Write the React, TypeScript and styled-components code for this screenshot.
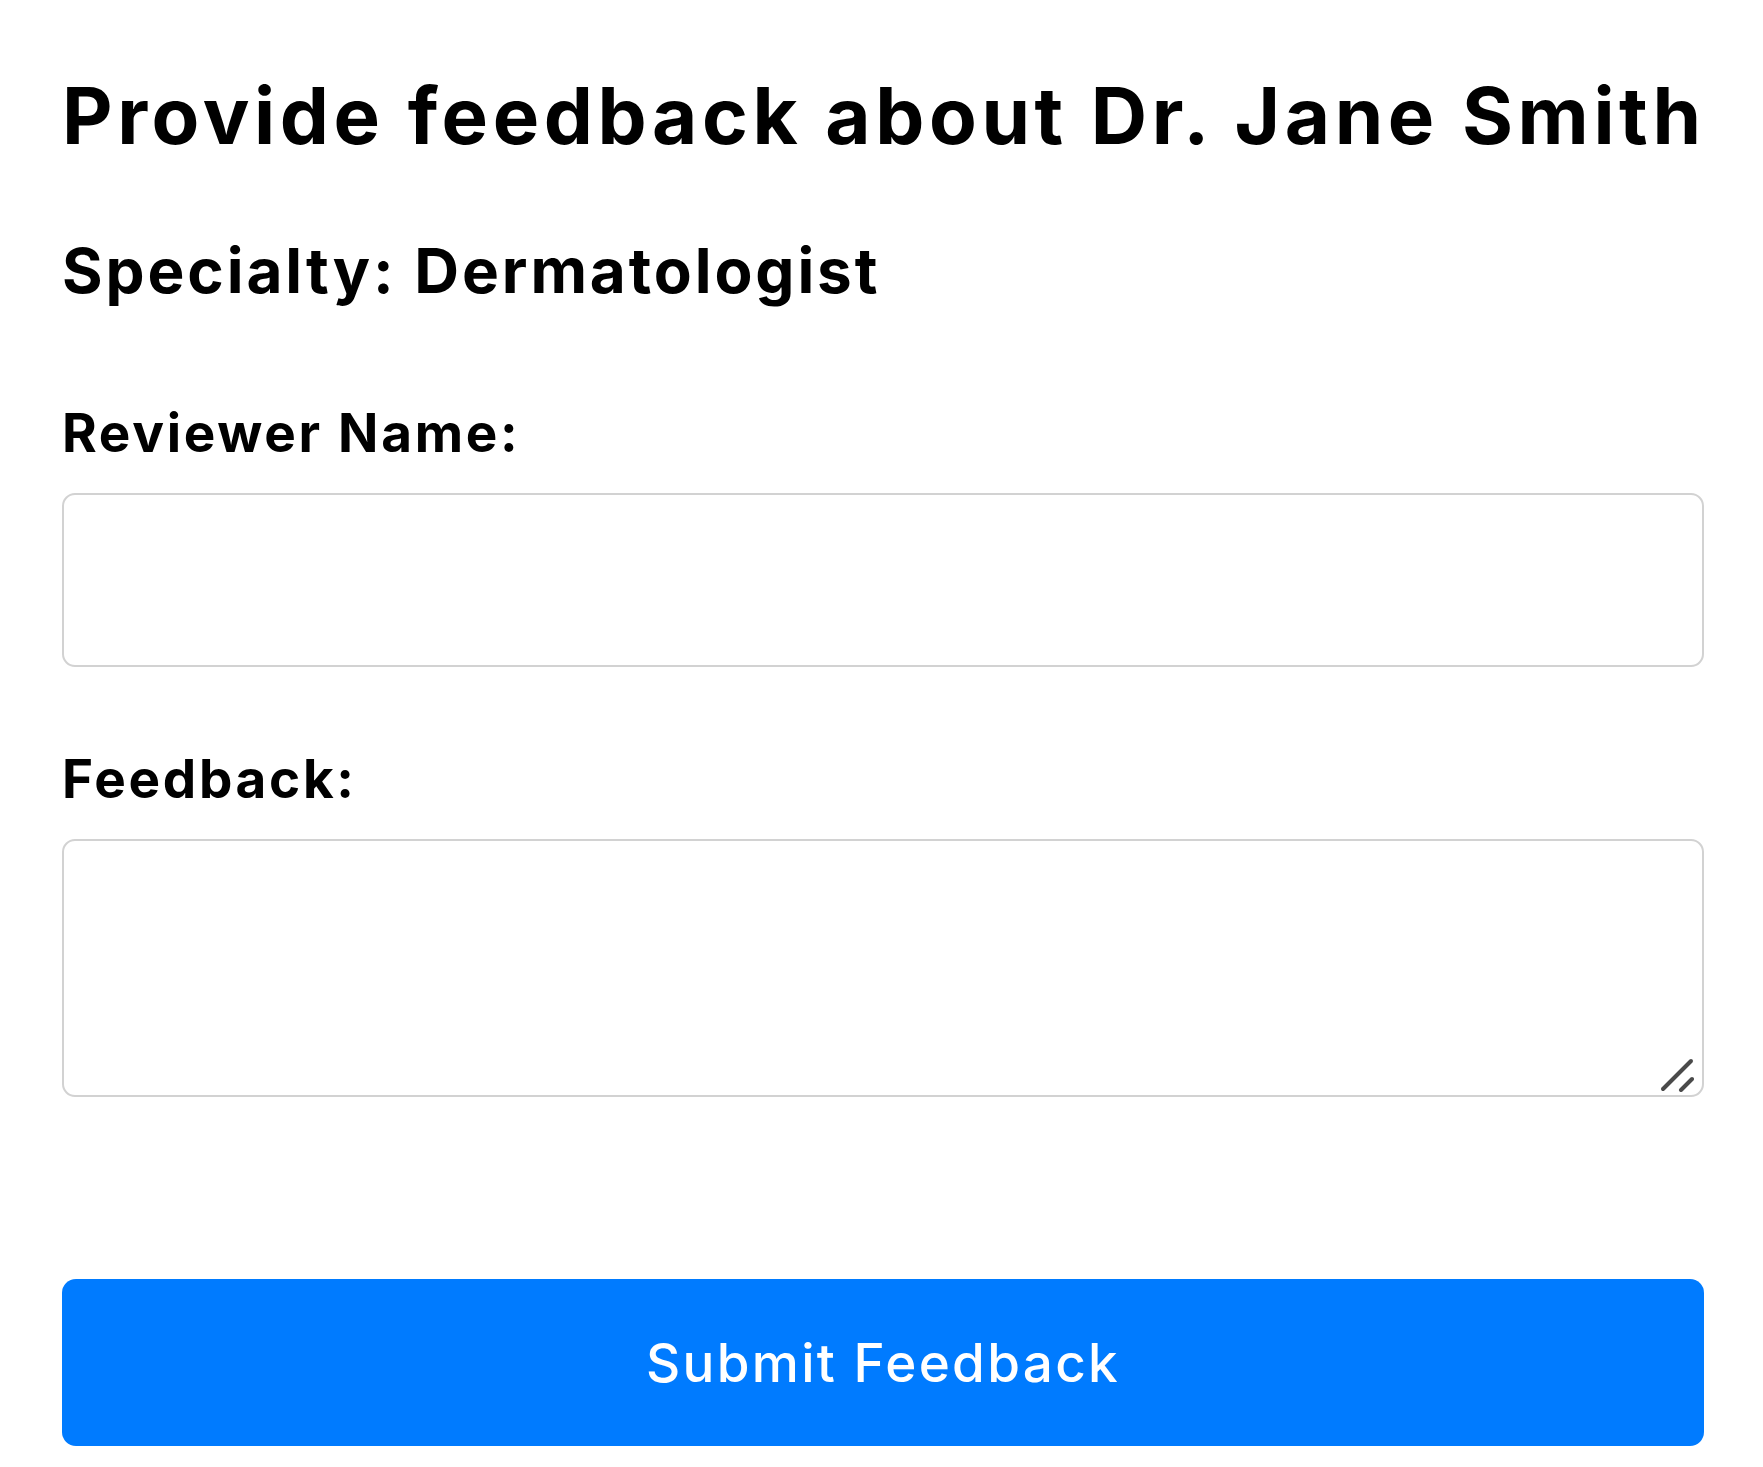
import React from 'react';
import styled, {createGlobalStyle} from "styled-components";

const GlobalStyle = createGlobalStyle`
    html, body {
        margin: 0;
        padding: 0;
        background: #ffffff;
    }
    body {
        font-family: Inter, "Open Sans", sans-serif;
        color: #000000;
    }
`

export default function App() {
    return (
        <>
            <GlobalStyle/>
            <StyledPage>
                <FeedbackForm onSubmit={e => e.preventDefault()}>
                    <StyledTitle>Provide feedback about Dr. Jane Smith</StyledTitle>
                    <StyledSubtitle>Specialty: Dermatologist</StyledSubtitle>

                    <Field>
                        <StyledLabel htmlFor="reviewer">Reviewer Name:</StyledLabel>
                        <StyledInput id="reviewer" type="text"/>
                    </Field>

                    <Field>
                        <StyledLabel htmlFor="feedback">Feedback:</StyledLabel>
                        <TextareaWrapper>
                            <StyledTextarea id="feedback"/>
                            <ResizeGrip width={34} height={34} viewBox="0 0 34 34">
                                <line x1={3} y1={31} x2={31} y2={3}/>
                                <line x1={21} y1={32} x2={32} y2={21}/>
                            </ResizeGrip>
                        </TextareaWrapper>
                    </Field>

                    <SubmitButton type="submit">Submit Feedback</SubmitButton>
                </FeedbackForm>
            </StyledPage>
        </>
    );
}

const StyledPage = styled.div`
    padding: 69px 59px 20px 62px;
`

const FeedbackForm = styled.form`
    display: flex;
    flex-direction: column;
    width: 1642px;
`

const StyledTitle = styled.h2`
    margin: 0;
    font-size: 78px;
    line-height: 94px;
    font-weight: 700;
    letter-spacing: 4.6px;
    white-space: nowrap;
`

const StyledSubtitle = styled.h3`
    margin: 70px 0 0;
    font-size: 62px;
    line-height: 75px;
    font-weight: 700;
    letter-spacing: 2.9px;
`

const Field = styled.div`
    display: flex;
    flex-direction: column;
    gap: 28px;
    margin-top: 93px;

    & + & {
        margin-top: 80px;
    }
`

const StyledLabel = styled.label`
    font-size: 53px;
    line-height: 64px;
    font-weight: 700;
    letter-spacing: 2.7px;
`

const StyledInput = styled.input`
    box-sizing: border-box;
    width: 100%;
    height: 174px;
    border: 2px solid #d2d2d2;
    border-radius: 13px;
    padding: 0 30px;
    font: inherit;
    font-size: 53px;
    outline: none;
`

const TextareaWrapper = styled.div`
    position: relative;
    display: flex;
`

const StyledTextarea = styled.textarea`
    box-sizing: border-box;
    width: 100%;
    height: 258px;
    border: 2px solid #d2d2d2;
    border-radius: 13px;
    padding: 20px 30px;
    font: inherit;
    font-size: 53px;
    resize: none;
    outline: none;
`

const ResizeGrip = styled.svg`
    position: absolute;
    right: 10px;
    bottom: 5px;
    stroke: #4a4a4a;
    stroke-width: 4;
    stroke-linecap: round;
    pointer-events: none;
`

const SubmitButton = styled.button`
    margin-top: 182px;
    height: 167px;
    width: 100%;
    border: none;
    border-radius: 14px;
    background-color: #007bff;
    color: #ffffff;
    font-family: Inter, "Open Sans", sans-serif;
    font-size: 53px;
    font-weight: 500;
    letter-spacing: 2.3px;
    cursor: pointer;
`
